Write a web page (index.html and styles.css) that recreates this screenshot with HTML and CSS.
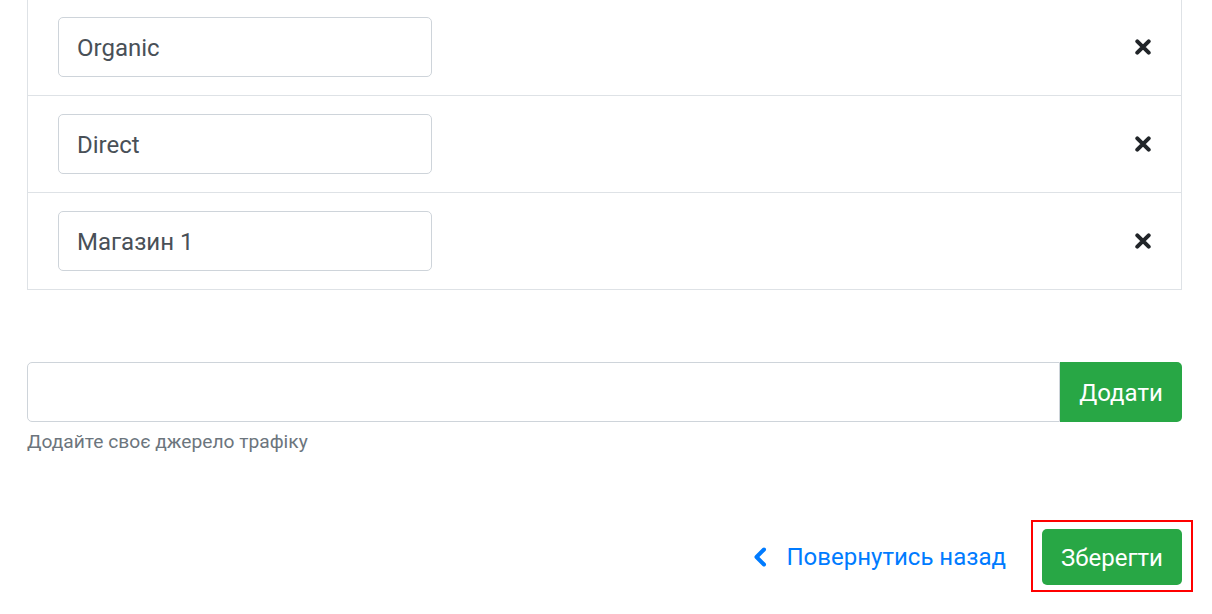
FILE: index.html
```html
<!DOCTYPE html>
<html lang="uk">
<head>
    <meta charset="utf-8">
    <title>Джерела трафіку</title>
    <link rel="stylesheet" href="styles.css">
</head>
<body>
    <div class="page">

        <div class="source-list">
            <div class="source-row">
                <input class="field name-field" type="text" value="Organic">
                <button class="remove" title="Видалити">
                    <svg viewBox="0 0 16 16" width="16" height="16"><path d="M2.3 2.3 L13.7 13.7 M13.7 2.3 L2.3 13.7"/></svg>
                </button>
            </div>
            <div class="source-row">
                <input class="field name-field" type="text" value="Direct">
                <button class="remove" title="Видалити">
                    <svg viewBox="0 0 16 16" width="16" height="16"><path d="M2.3 2.3 L13.7 13.7 M13.7 2.3 L2.3 13.7"/></svg>
                </button>
            </div>
            <div class="source-row">
                <input class="field name-field" type="text" value="Магазин 1">
                <button class="remove" title="Видалити">
                    <svg viewBox="0 0 16 16" width="16" height="16"><path d="M2.3 2.3 L13.7 13.7 M13.7 2.3 L2.3 13.7"/></svg>
                </button>
            </div>
        </div>

        <div class="add-source">
            <div class="input-group">
                <input class="field group-field" type="text">
                <button class="btn btn-green group-btn">Додати</button>
            </div>
            <small class="help">Додайте своє джерело трафіку</small>
        </div>

        <div class="footer">
            <a class="back" href="#">
                <svg viewBox="0 0 14 20" width="14" height="20"><path d="M11 2.5 L3.5 10 L11 17.5"/></svg>
                Повернутись назад
            </a>
            <div class="save-wrap">
                <button class="btn btn-green">Зберегти</button>
                <div class="highlight"></div>
            </div>
        </div>

    </div>
</body>
</html>
```

FILE: styles.css
```css
:root {
    --radius: 5px;
    --line: #dee2e6;
    --green: #28a745;
}

body {
    margin: 0;
    background-color: white;
    color: #495057;
    font-family: Roboto, "Noto Sans", sans-serif;
    font-size: 24px;
}

.page {
    width: 1155px;
    margin-left: 27px;
    padding-bottom: 40px;
}

.field {
    font-family: inherit;
    font-size: 24px;
    line-height: 36px;
    color: #495057;
    padding: 12px 18px 10px;
    border: 1px solid #ced4da;
    border-radius: var(--radius);
    background-color: white;
    box-sizing: border-box;
    height: 60px;
    outline: none;
}

/* list of sources */
.source-list {
    margin-top: -2px;
    border: 1px solid var(--line);
}
.source-row {
    display: flex;
    align-items: center;
    justify-content: space-between;
    padding: 18px 30px;
}
.source-row + .source-row {
    border-top: 1px solid var(--line);
}
.name-field {
    width: 374px;
}
.remove {
    border: none;
    background: none;
    padding: 0;
    width: 16px;
    height: 16px;
    display: flex;
    cursor: pointer;
}
.remove svg path {
    stroke: #212529;
    stroke-width: 4;
    stroke-linecap: round;
    fill: none;
}

/* add new source */
.add-source {
    margin-top: 72px;
}
.input-group {
    display: flex;
}
.group-field {
    flex: 1;
    border-top-right-radius: 0;
    border-bottom-right-radius: 0;
}
.btn {
    font-family: inherit;
    font-size: 24px;
    line-height: 36px;
    border: none;
    border-radius: var(--radius);
    cursor: pointer;
}
.btn-green {
    background-color: var(--green);
    color: white;
}
.group-btn {
    width: 122px;
    height: 60px;
    padding: 2px 0 0;
    border-top-left-radius: 0;
    border-bottom-left-radius: 0;
}
.help {
    display: block;
    margin-top: 6px;
    font-size: 19.2px;
    line-height: 28px;
    color: #6c757d;
}

/* footer */
.footer {
    margin-top: 73px;
    display: flex;
    justify-content: flex-end;
    align-items: center;
}
.back {
    display: flex;
    align-items: center;
    gap: 20px;
    color: #007bff;
    text-decoration: none;
    margin-right: 36px;
}
.back svg path {
    stroke: #007bff;
    stroke-width: 4;
    fill: none;
    stroke-linecap: round;
    stroke-linejoin: round;
}
.save-wrap {
    position: relative;
}
.save-wrap .btn {
    display: block;
    width: 140px;
    height: 56px;
    padding: 2px 0 0;
}
.highlight {
    position: absolute;
    top: -9px;
    bottom: -7px;
    left: -11px;
    right: -11px;
    border: 2px solid red;
}
```
